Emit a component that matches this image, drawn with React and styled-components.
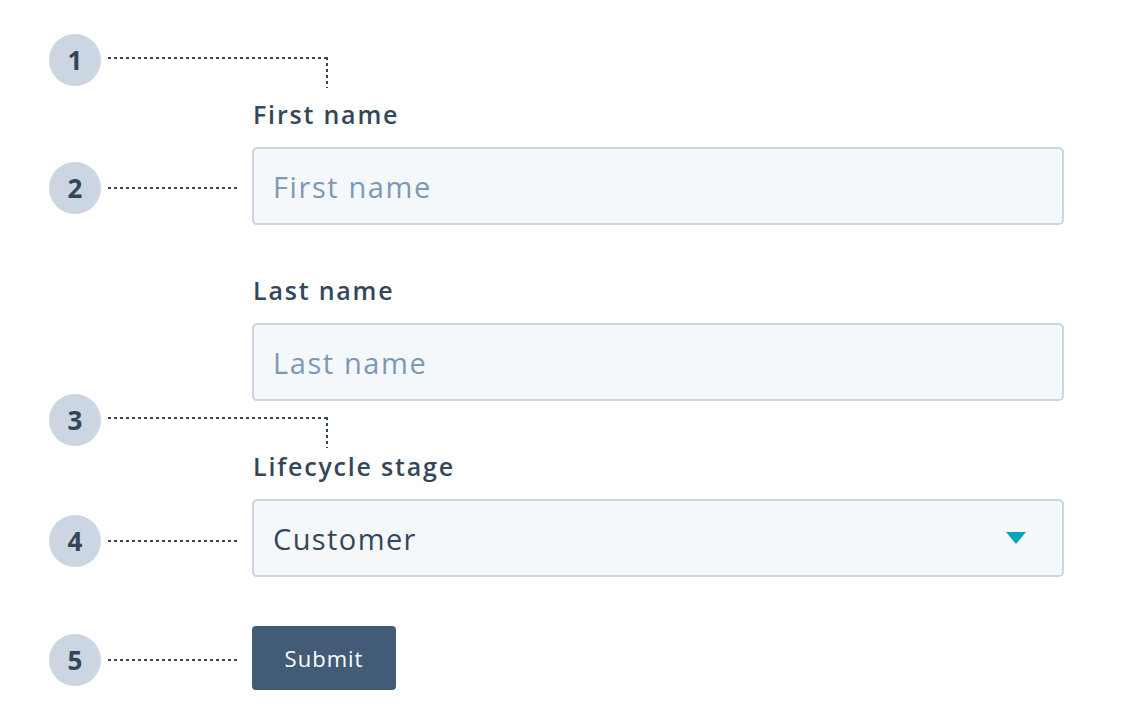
import styled, { createGlobalStyle } from "styled-components";

const GlobalStyle = createGlobalStyle`
    body {
        margin: 0;
        background: #ffffff;
        font-family: "Open Sans", "Noto Sans", sans-serif;
        color: #33475b;
    }
`;

const Page = styled.div`
    width: 1128px;
    height: 720px;
    padding: 34px 0 0 49px;
    box-sizing: border-box;
    display: grid;
    grid-template-columns: 203px 812px;
    align-content: start;
`;

const Marker = styled.div`
    width: 52px;
    height: 52px;
    flex: none;
    border-radius: 50%;
    background: #cbd6e2;
    color: #33475b;
    font-size: 26px;
    font-weight: 700;
    display: flex;
    align-items: center;
    justify-content: center;
    line-height: 1;
`;

// callout that sits in the gutter and points right at a field
const Callout = styled.div`
    grid-column: 1;
    display: flex;
    align-items: center;
    margin-top: ${(p) => p.$nudge || 0}px;
`;

const Dashes = styled.div`
    flex: 1;
    height: 2px;
    margin: 0 12px 0 7px;
    background: repeating-linear-gradient(to right, #33475b 0 3px, transparent 3px 6px);
`;

// callout that runs right then drops down onto a label
const ElbowCallout = styled.div`
    grid-column: 1 / span 2;
    display: flex;
    align-items: flex-start;
    height: 54px;
    margin-top: ${(p) => p.$nudge || 0}px;
`;

const Elbow = styled.div`
    width: 220px;
    height: 31px;
    margin: 23px 0 0 7px;
    box-sizing: border-box;
    background:
        repeating-linear-gradient(to right, #33475b 0 3px, transparent 3px 6px) top left / 100% 2px no-repeat,
        repeating-linear-gradient(to bottom, #33475b 0 3px, transparent 3px 6px) top right / 2px 100% no-repeat;
`;

const Label = styled.label`
    grid-column: 2;
    display: block;
    font-size: 25px;
    font-weight: 600;
    line-height: 28px;
    letter-spacing: 1.8px;
    color: #33475b;
    padding-left: 1px;
    margin-top: ${(p) => p.$top || 0}px;
    margin-bottom: 19px;
`;

const Field = styled.div`
    grid-column: 2;
    height: 78px;
    box-sizing: border-box;
    border: 2px solid #cbd6e2;
    border-radius: 5px;
    background: #f5f8fa;
    display: flex;
    align-items: center;
    padding: 0 36px 0 19px;
`;

const Input = styled.input`
    flex: 1;
    border: none;
    outline: none;
    background: transparent;
    font-family: "Open Sans", "Noto Sans", sans-serif;
    font-size: 29px;
    letter-spacing: 1.6px;
    color: #33475b;
    padding: 0;

    &::placeholder {
        color: #7c98b6;
    }
`;

const Value = styled.span`
    flex: 1;
    font-size: 29px;
    letter-spacing: 1.4px;
    color: #33475b;
`;

const Caret = styled.span`
    width: 0;
    height: 0;
    border-left: 10px solid transparent;
    border-right: 10px solid transparent;
    border-top: 12px solid #00a4bd;
`;

const Button = styled.button`
    grid-column: 2;
    justify-self: start;
    width: 144px;
    height: 64px;
    border: none;
    border-radius: 4px;
    background: #425b76;
    color: #ffffff;
    font-family: "Open Sans", "Noto Sans", sans-serif;
    font-size: 22px;
    letter-spacing: 1px;
    padding: 0;
`;

const Row = styled.div`
    display: contents;
`;

const Spacer = styled.div`
    grid-column: 1 / span 2;
    height: ${(p) => p.$h}px;
`;

export default function App() {
    return (
        <>
            <GlobalStyle />
            <Page>
                <ElbowCallout>
                    <Marker>1</Marker>
                    <Elbow />
                </ElbowCallout>
                <Label $top={12}>First name</Label>
                <Row>
                    <Callout $nudge={3}>
                        <Marker>2</Marker>
                        <Dashes />
                    </Callout>
                    <Field>
                        <Input placeholder="First name" />
                    </Field>
                </Row>
                <Label $top={51}>Last name</Label>
                <Row>
                    <Callout />
                    <Field>
                        <Input placeholder="Last name" />
                    </Field>
                </Row>
                <ElbowCallout $nudge={-7}>
                    <Marker>3</Marker>
                    <Elbow />
                </ElbowCallout>
                <Label $top={4}>Lifecycle stage</Label>
                <Row>
                    <Callout $nudge={5}>
                        <Marker>4</Marker>
                        <Dashes />
                    </Callout>
                    <Field>
                        <Value>Customer</Value>
                        <Caret />
                    </Field>
                </Row>
                <Spacer $h={49} />
                <Row>
                    <Callout $nudge={4}>
                        <Marker>5</Marker>
                        <Dashes />
                    </Callout>
                    <Button>Submit</Button>
                </Row>
            </Page>
        </>
    );
}
